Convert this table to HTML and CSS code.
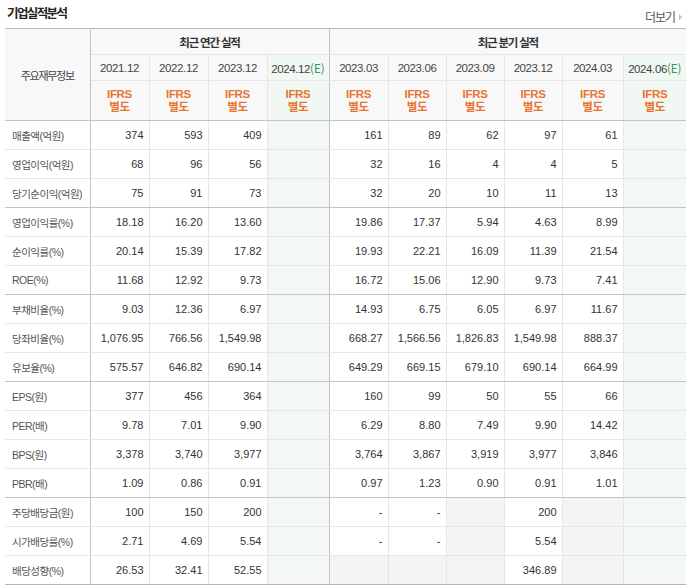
FILE: index.html
```html
<!DOCTYPE html>
<html lang="ko">
<head>
<meta charset="utf-8">
<title>기업실적분석</title>
<link rel="stylesheet" href="styles.css">
</head>
<body>
<div class="wrap">
  <div class="head">
    <h2 class="title">기업실적분석</h2>
    <a class="more" href="#">더보기<span class="arr"></span></a>
  </div>
  <table class="fin">
    <colgroup>
      <col class="c-label">
      <col class="c59"><col class="c59"><col class="c59"><col class="c62">
      <col class="c59"><col class="c58"><col class="c58"><col class="c58"><col class="c61"><col class="c63">
    </colgroup>
    <thead>
      <tr class="h1">
        <th rowspan="3" class="lab sep">주요재무정보</th>
        <th colspan="4" class="grp sep">최근 연간 실적</th>
        <th colspan="6" class="grp">최근 분기 실적</th>
      </tr>
      <tr class="h2">
        <th>2021.12</th><th>2022.12</th><th>2023.12</th><th class="est sep">2024.12<span class="e">(E)</span></th>
        <th>2023.03</th><th>2023.06</th><th>2023.09</th><th>2023.12</th><th>2024.03</th><th class="est">2024.06<span class="e">(E)</span></th>
      </tr>
      <tr class="h3">
        <th><span class="ifrs">IFRS<br>별도</span></th><th><span class="ifrs">IFRS<br>별도</span></th><th><span class="ifrs">IFRS<br>별도</span></th><th class="est sep"><span class="ifrs">IFRS<br>별도</span></th>
        <th><span class="ifrs">IFRS<br>별도</span></th><th><span class="ifrs">IFRS<br>별도</span></th><th><span class="ifrs">IFRS<br>별도</span></th><th><span class="ifrs">IFRS<br>별도</span></th><th><span class="ifrs">IFRS<br>별도</span></th><th class="est"><span class="ifrs">IFRS<br>별도</span></th>
      </tr>
    </thead>
    <tbody>
      <tr><th class="sep">매출액(억원)</th><td>374</td><td>593</td><td>409</td><td class="est sep"></td><td>161</td><td>89</td><td>62</td><td>97</td><td>61</td><td class="est"></td></tr>
      <tr><th class="sep">영업이익(억원)</th><td>68</td><td>96</td><td>56</td><td class="est sep"></td><td>32</td><td>16</td><td>4</td><td>4</td><td>5</td><td class="est"></td></tr>
      <tr class="gend"><th class="sep">당기순이익(억원)</th><td>75</td><td>91</td><td>73</td><td class="est sep"></td><td>32</td><td>20</td><td>10</td><td>11</td><td>13</td><td class="est"></td></tr>
      <tr><th class="sep">영업이익률(%)</th><td>18.18</td><td>16.20</td><td>13.60</td><td class="est sep"></td><td>19.86</td><td>17.37</td><td>5.94</td><td>4.63</td><td>8.99</td><td class="est"></td></tr>
      <tr><th class="sep">순이익률(%)</th><td>20.14</td><td>15.39</td><td>17.82</td><td class="est sep"></td><td>19.93</td><td>22.21</td><td>16.09</td><td>11.39</td><td>21.54</td><td class="est"></td></tr>
      <tr class="gend"><th class="sep">ROE(%)</th><td>11.68</td><td>12.92</td><td>9.73</td><td class="est sep"></td><td>16.72</td><td>15.06</td><td>12.90</td><td>9.73</td><td>7.41</td><td class="est"></td></tr>
      <tr><th class="sep">부채비율(%)</th><td>9.03</td><td>12.36</td><td>6.97</td><td class="est sep"></td><td>14.93</td><td>6.75</td><td>6.05</td><td>6.97</td><td>11.67</td><td class="est"></td></tr>
      <tr><th class="sep">당좌비율(%)</th><td>1,076.95</td><td>766.56</td><td>1,549.98</td><td class="est sep"></td><td>668.27</td><td>1,566.56</td><td>1,826.83</td><td>1,549.98</td><td>888.37</td><td class="est"></td></tr>
      <tr class="gend"><th class="sep">유보율(%)</th><td>575.57</td><td>646.82</td><td>690.14</td><td class="est sep"></td><td>649.29</td><td>669.15</td><td>679.10</td><td>690.14</td><td>664.99</td><td class="est"></td></tr>
      <tr><th class="sep">EPS(원)</th><td>377</td><td>456</td><td>364</td><td class="est sep"></td><td>160</td><td>99</td><td>50</td><td>55</td><td>66</td><td class="est"></td></tr>
      <tr><th class="sep">PER(배)</th><td>9.78</td><td>7.01</td><td>9.90</td><td class="est sep"></td><td>6.29</td><td>8.80</td><td>7.49</td><td>9.90</td><td>14.42</td><td class="est"></td></tr>
      <tr><th class="sep">BPS(원)</th><td>3,378</td><td>3,740</td><td>3,977</td><td class="est sep"></td><td>3,764</td><td>3,867</td><td>3,919</td><td>3,977</td><td>3,846</td><td class="est"></td></tr>
      <tr class="gend"><th class="sep">PBR(배)</th><td>1.09</td><td>0.86</td><td>0.91</td><td class="est sep"></td><td>0.97</td><td>1.23</td><td>0.90</td><td>0.91</td><td>1.01</td><td class="est"></td></tr>
      <tr><th class="sep">주당배당금(원)</th><td>100</td><td>150</td><td>200</td><td class="est sep"></td><td>-</td><td>-</td><td class="na"></td><td>200</td><td class="na"></td><td class="est"></td></tr>
      <tr><th class="sep">시가배당률(%)</th><td>2.71</td><td>4.69</td><td>5.54</td><td class="est sep"></td><td>-</td><td>-</td><td class="na"></td><td>5.54</td><td class="na"></td><td class="est"></td></tr>
      <tr class="last"><th class="sep">배당성향(%)</th><td>26.53</td><td>32.41</td><td>52.55</td><td class="est sep"></td><td class="na"></td><td class="na"></td><td class="na"></td><td>346.89</td><td class="na"></td><td class="est"></td></tr>
    </tbody>
  </table>
</div>
</body>
</html>
```
FILE: styles.css
```css
* { box-sizing: border-box; }
html, body { margin: 0; padding: 0; background: #fff; }
body {
  font-family: "Liberation Sans", "Noto Sans CJK KR", sans-serif;
  color: #333;
}
.wrap { width: 695px; padding: 0 9px 0 5px; }
.head {
  height: 28px;
  display: flex;
  justify-content: space-between;
  align-items: flex-start;
}
.title {
  margin: 4px 0 0 2px;
  font-family: "Noto Sans CJK KR", sans-serif;
  font-size: 12.5px;
  line-height: 17px;
  font-weight: 700;
  letter-spacing: -1.6px;
  color: #222;
}
.more {
  margin-top: 10px;
  margin-right: 4px;
  font-family: "Noto Sans CJK KR", sans-serif;
  font-size: 12px;
  line-height: 14px;
  letter-spacing: -1px;
  color: #555;
  text-decoration: none;
  display: flex;
  align-items: center;
}
.arr {
  display: inline-block;
  margin-left: 4px;
  width: 0; height: 0;
  border-left: 3px solid #bbb;
  border-top: 3px solid transparent;
  border-bottom: 3px solid transparent;
}
.fin {
  width: 681px;
  table-layout: fixed;
  border-collapse: collapse;
  border-top: 1px solid #b5b5b5;
  border-bottom: 1px solid #b5b5b5;
  font-size: 11px;
}
.c-label { width: 85px; }
.c58 { width: 58px; }
.c59 { width: 59px; }
.c61 { width: 61px; }
.c62 { width: 62px; }
.c63 { width: 63px; }
.fin th, .fin td {
  padding: 0;
  border-left: 1px solid #e6e6e6;
  border-bottom: 1px solid #e6e6e6;
  font-weight: normal;
}
.fin tr > :first-child { border-left: 0; }
.fin thead th {
  background: #f8f8f8;
  text-align: center;
}
.fin thead .h1 th { height: 26px; }
.fin thead .h2 th { height: 26px; color: #444; font-size: 11.5px; letter-spacing: -0.4px; white-space: nowrap; }
.fin thead .h3 th { height: 40px; border-bottom: 1px solid #c4c4c4; }
.fin thead th.lab {
  font-family: "Noto Sans CJK KR", sans-serif;
  font-size: 11px;
  letter-spacing: -1.3px;
  color: #444;
  border-bottom: 1px solid #c4c4c4;
}
.fin thead th.grp {
  font-family: "Noto Sans CJK KR", sans-serif;
  font-size: 11.5px;
  font-weight: 700;
  letter-spacing: -1.2px;
  color: #333;
}
.fin .sep { border-right: 1px solid #c4c4c4; }
.fin .est { background: #f3f8f4; }
.fin thead th.est { background: #f1f7f2; }
.e {
  font-family: "Noto Sans CJK KR", sans-serif;
  color: #3d8f5c;
  letter-spacing: 0;
}
.ifrs {
  display: inline-block;
  font-family: "Liberation Sans", "Noto Sans CJK KR", sans-serif;
  font-size: 11.5px;
  font-weight: 700;
  line-height: 13px;
  color: #e9742f;
  letter-spacing: -0.3px;
}
.fin tbody th {
  height: 29px;
  text-align: left;
  padding-left: 7px;
  font-family: "Liberation Sans", "Noto Sans CJK KR", sans-serif;
  font-size: 10.5px;
  letter-spacing: -0.5px;
  color: #555;
  background: #fff;
  white-space: nowrap;
}
.fin tbody td {
  height: 29px;
  text-align: right;
  padding-right: 5px;
  color: #333;
}
.fin tbody tr.gend th, .fin tbody tr.gend td { border-bottom: 1px solid #c4c4c4; }
.fin tbody tr.last th, .fin tbody tr.last td { border-bottom: 1px solid #b5b5b5; }
.fin td.na { background: #f4f4f4; }
```
